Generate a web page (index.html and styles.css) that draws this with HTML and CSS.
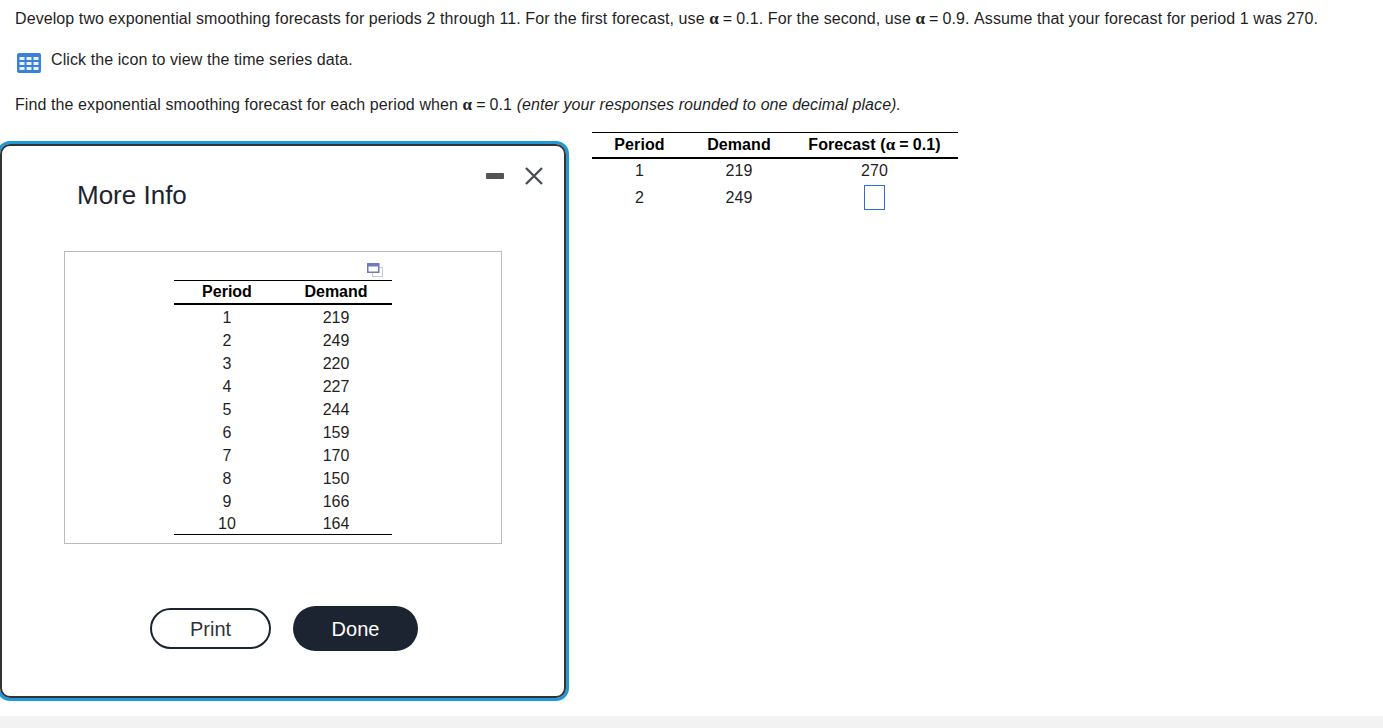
FILE: index.html
```html
<!DOCTYPE html>
<html lang="en">
<head>
    <meta charset="UTF-8">
    <meta name="viewport" content="width=device-width, initial-scale=1.0">
    <title>More Info</title>
    <link rel="stylesheet" href="styles.css">
</head>
<body>
    <div class="page">
        <main class="question">
            <p class="intro">Develop two exponential smoothing forecasts for periods 2 through 11. For the first forecast, use <span class="alpha">α</span><span class="eq">=</span>0.1. For the second, use <span class="alpha">α</span><span class="eq">=</span>0.9. Assume that your forecast for period 1 was 270.</p>
            <p class="data-link">
                <svg class="grid-icon" width="24" height="20" viewBox="0 0 24 20">
                    <rect width="24" height="20" rx="2" fill="#3a7fd9"/>
                    <g fill="#fff" opacity="0.9">
                        <rect x="2.5" y="4" width="5" height="3"/><rect x="9.5" y="4" width="5" height="3"/><rect x="16.5" y="4" width="5" height="3"/>
                        <rect x="2.5" y="9" width="5" height="3"/><rect x="9.5" y="9" width="5" height="3"/><rect x="16.5" y="9" width="5" height="3"/>
                        <rect x="2.5" y="14" width="5" height="3"/><rect x="9.5" y="14" width="5" height="3"/><rect x="16.5" y="14" width="5" height="3"/>
                    </g>
                </svg>
                <span>Click the icon to view the time series data.</span>
            </p>
            <p class="prompt">Find the exponential smoothing forecast for each period when <span class="alpha">α</span><span class="eq">=</span>0.1 <em>(enter your responses rounded to one decimal place).</em></p>
            <table class="forecast-table">
                <thead>
                    <tr>
                        <th class="col-period">Period</th>
                        <th class="col-demand">Demand</th>
                        <th class="col-forecast">Forecast (<span class="alpha">α</span><span class="eq">=</span>0.1)</th>
                    </tr>
                </thead>
                <tbody>
                    <tr><td>1</td><td>219</td><td>270</td></tr>
                    <tr><td>2</td><td>249</td><td><span class="answer-box"></span></td></tr>
                </tbody>
            </table>
        </main>
        <div class="bottom-bar"></div>
    </div>

    <div class="modal">
        <div class="modal-inner">
            <div class="window-btns">
                <span class="minimize"></span>
                <svg class="close" width="20" height="20" viewBox="0 0 20 20">
                    <path d="M2 2 L18 18 M18 2 L2 18" stroke="#4a4f57" stroke-width="2.4" fill="none"/>
                </svg>
            </div>
            <h2>More Info</h2>
            <div class="data-box">
                <div class="copy-row">
                    <svg width="16" height="14" viewBox="0 0 16 14">
                        <rect x="5.5" y="4.5" width="10" height="9" fill="#fff" stroke="#c3c8e6"/>
                        <rect x="0.75" y="0.75" width="11" height="8.5" fill="#fff" stroke="#6f7abf" stroke-width="1.5"/>
                        <rect x="1" y="1" width="10.5" height="2.5" fill="#6f7abf"/>
                    </svg>
                </div>
                <table class="data-table">
                    <thead>
                        <tr><th class="col-a">Period</th><th class="col-b">Demand</th></tr>
                    </thead>
                    <tbody>
                        <tr><td>1</td><td>219</td></tr>
                        <tr><td>2</td><td>249</td></tr>
                        <tr><td>3</td><td>220</td></tr>
                        <tr><td>4</td><td>227</td></tr>
                        <tr><td>5</td><td>244</td></tr>
                        <tr><td>6</td><td>159</td></tr>
                        <tr><td>7</td><td>170</td></tr>
                        <tr><td>8</td><td>150</td></tr>
                        <tr><td>9</td><td>166</td></tr>
                        <tr><td>10</td><td>164</td></tr>
                    </tbody>
                </table>
            </div>
            <div class="modal-actions">
                <button class="btn-print">Print</button>
                <button class="btn-done">Done</button>
            </div>
        </div>
    </div>
</body>
</html>
```

FILE: styles.css
```css
* {
    box-sizing: border-box;
}
html, body {
    margin: 0;
    height: 100%;
    overflow: hidden;
}
body {
    font-family: "Liberation Sans", Arial, sans-serif;
    font-size: 16px;
    color: #1f1f1f;
    background-color: white;
}
.page {
    display: flex;
    flex-direction: column;
    height: 100%;
}
.question {
    flex: 1;
    padding: 10px 15px 0;
    letter-spacing: 0.09px;
}
.question p {
    margin: 0;
    line-height: 18px;
}
.alpha {
    font-family: "Liberation Serif", "Times New Roman", serif;
    font-size: 17px;
    font-weight: bold;
}
.eq {
    margin: 0 4px;
}
.data-link {
    display: flex;
    align-items: flex-start;
    gap: 10px;
    padding: 23px 0 0 2px;
}
.grid-icon {
    margin-top: 2px;
}
.question .prompt {
    margin-top: 23px;
}
.forecast-table {
    border-collapse: collapse;
    margin: 18px 0 0 577px;
}
.forecast-table th {
    height: 25px;
    padding: 0;
    font-size: 16px;
    color: #000;
    border-top: 1px solid #000;
    border-bottom: 2px solid #000;
}
.forecast-table td {
    height: 27px;
    padding: 0 0 1px;
    text-align: center;
}
.col-period {
    width: 95px;
}
.col-demand {
    width: 104px;
}
.col-forecast {
    width: 167px;
}
.answer-box {
    display: inline-block;
    width: 21px;
    height: 25px;
    margin-top: -1px;
    vertical-align: middle;
    border: 1px solid #2f6fd0;
}
.bottom-bar {
    height: 12px;
    background-color: #f2f2f2;
}

/* dialog sits over the question */
.modal {
    position: absolute;
    left: -3px;
    top: 141px;
    width: 572px;
    height: 560px;
    border: 3px solid #1e9ad6;
    border-radius: 13px;
}
.modal-inner {
    position: relative;
    height: 100%;
    background-color: white;
    border: 2px solid #333;
    border-radius: 10px;
    padding-top: 33px;
}
.modal h2 {
    margin: 0 0 0 75px;
    font-size: 26px;
    font-weight: normal;
    line-height: 32px;
    color: #1c2331;
}
.window-btns {
    position: absolute;
    top: 20px;
    right: 20px;
    display: flex;
    align-items: center;
    gap: 20px;
}
.minimize {
    width: 18px;
    height: 6px;
    border-radius: 1px;
    background-color: #555;
}
.data-box {
    width: 438px;
    height: 293px;
    margin: 40px 0 0 62px;
    padding: 11px 109px 0;
    border: 1px solid #bbb;
}
.copy-row {
    display: flex;
    justify-content: flex-end;
    height: 17px;
    padding-right: 9px;
}
.data-table {
    width: 218px;
    border-collapse: collapse;
    border-bottom: 1px solid #000;
}
.data-table th {
    height: 23px;
    padding: 0;
    font-size: 16px;
    color: #000;
    border-top: 1px solid #000;
    border-bottom: 2px solid #000;
}
.data-table td {
    height: 23px;
    padding: 3px 0 0;
    line-height: 18px;
    text-align: center;
}
.data-table tr:first-child td {
    height: 24px;
}
.col-a {
    width: 106px;
}
.modal-actions {
    display: flex;
    align-items: center;
    gap: 22px;
    margin: 62px 0 0 148px;
}
.modal-actions button {
    font-family: "Liberation Sans", Arial, sans-serif;
    font-size: 20px;
    border-radius: 23px;
    cursor: pointer;
}
.btn-print {
    width: 121px;
    height: 41px;
    padding: 2px 0 0;
    color: #333;
    background-color: white;
    border: 2px solid #1c2331;
}
.btn-done {
    width: 125px;
    height: 45px;
    padding: 2px 0 0;
    color: white;
    background-color: #1c2331;
    border: none;
}
```
